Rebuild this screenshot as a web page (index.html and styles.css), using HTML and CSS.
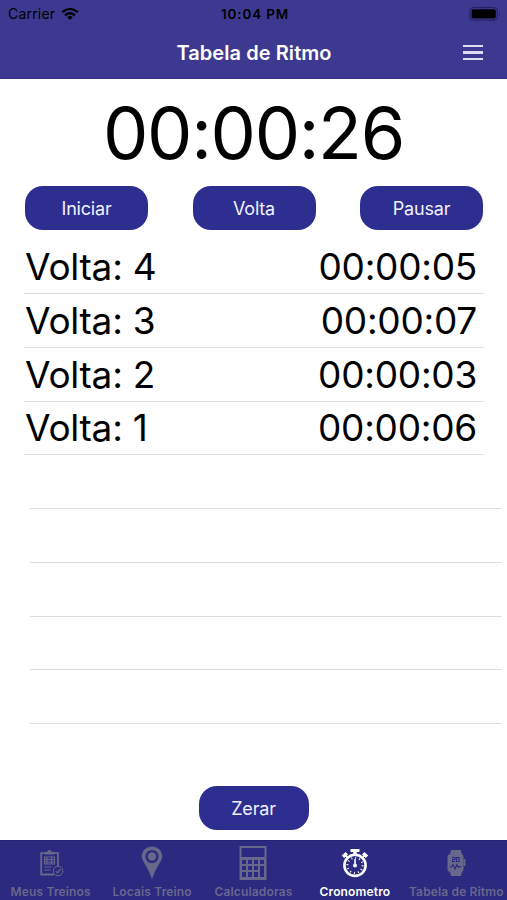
FILE: index.html
```html
<!DOCTYPE html>
<html lang="pt-BR">
<head>
<meta charset="utf-8">
<title>Tabela de Ritmo</title>
<link rel="stylesheet" href="styles.css">
</head>
<body>
<header class="top">
  <div class="status">
    <div class="carrier"><span>Carrier</span>
      <svg width="18" height="14" viewBox="0 0 18 14" fill="none" stroke="#000" stroke-width="2.3"><path d="M1.2 5.2Q9 -1.4 16.8 5.2M4 8.3Q9 4.2 14 8.3"/><path d="M9 13L6.1 10Q9 7.8 11.9 10Z" fill="#000" stroke="none"/></svg>
    </div>
    <span class="clock">10:04 PM</span>
    <svg class="battery" width="33" height="14" viewBox="0 0 33 14"><rect x=".9" y=".6" width="27.5" height="12.6" rx="3.6" fill="none" stroke="#211e5c"/><rect x="2.6" y="2.3" width="24.2" height="9.2" rx="2"/><path d="M30 5q1.8 2 0 4z" fill="#211e5c"/></svg>
  </div>
  <div class="nav">
    <h1>Tabela de Ritmo</h1>
    <div class="menu"><i></i><i></i><i></i></div>
  </div>
</header>
<main>
  <div class="timer">00:00:26</div>
  <div class="actions"><button>Iniciar</button><button>Volta</button><button>Pausar</button></div>
  <div class="laps">
    <div class="lap"><span>Volta: 4</span><span class="time">00:00:05</span></div>
    <div class="lap"><span>Volta: 3</span><span class="time">00:00:07</span></div>
    <div class="lap"><span>Volta: 2</span><span class="time">00:00:03</span></div>
    <div class="lap"><span>Volta: 1</span><span class="time">00:00:06</span></div>
    <div class="lap empty"></div><div class="lap empty"></div><div class="lap empty"></div><div class="lap empty"></div><div class="lap empty"></div>
  </div>
  <button class="reset">Zerar</button>
</main>
<nav class="tabs">
  <div class="tab">
    <svg width="26" height="32" viewBox="0 0 26 32" fill="none" stroke="currentColor"><path d="M16 27.500H3.200V6.200H20V19" stroke-width="1.800"/><path d="M7 7.500V4.800H9.500Q11.500 .800 13.500 4.800H16V7.500Z" fill="currentColor" stroke="none"/><path d="M6.500 10h10v7h-10zM7 12.500h9M7 15h9M9 10v7M13.500 10v7M6.500 20h7M6.500 23h6" stroke-width="1.100"/><circle cx="20" cy="24" r="4.800"/><path d="M17.700 24.100l1.800 1.800 3.200-3.800" stroke-width="1.300"/></svg>
    <span>Meus Treinos</span>
  </div>
  <div class="tab">
    <svg width="26" height="34" viewBox="0 0 26 34" fill="currentColor"><path fill-rule="evenodd" d="M13 .5C7.300 .500 2.800 4.800 2.800 10.300C2.800 15 8 19.500 13 33C18 19.500 23.200 15 23.200 10.300C23.200 4.800 18.700 .500 13 .500ZM13 3.900A6.600 6.600 0 0 1 13 17.100A6.600 6.600 0 0 1 13 3.900Z"/><circle cx="13" cy="10.500" r="4.200"/></svg>
    <span>Locais Treino</span>
  </div>
  <div class="tab">
    <svg width="28" height="36" viewBox="0 0 28 36" fill="currentColor"><path fill-rule="evenodd" d="M.5 1h27v34H.5zM2.500 3v9h23V3zM3 15v4h4v-4zM9 15v4h4v-4zM15 15v4h4v-4zM21 15v4h4v-4zM3 21v4h4v-4zM9 21v4h4v-4zM15 21v4h4v-4zM3 27v5h4v-5zM9 27v5h4v-5zM15 27v5h4v-5zM21 21v11h4V21z"/></svg>
    <span>Calculadoras</span>
  </div>
  <div class="tab active">
    <svg width="28" height="30" viewBox="0 0 28 30" fill="none" stroke="currentColor"><path d="M9.500 2.500h9" stroke-width="3"/><path d="M14 3v5" stroke-width="3.500"/><path d="M2 8.800l3.800-3.600M26 8.800l-3.800-3.600" stroke-width="3.400"/><path d="M4.500 7.500l3 3M23.500 7.500l-3 3" stroke-width="1.800"/><circle cx="14" cy="17.300" r="10.600" stroke-width="2.600"/><circle cx="14" cy="17.300" r="7.600" stroke-width="2" stroke-dasharray="1 2.979"/><path d="M14 11v6" stroke-width="1.600"/><circle cx="14" cy="17.500" r="2" fill="currentColor" stroke="none"/></svg>
    <span>Cronometro</span>
  </div>
  <div class="tab">
    <svg width="22" height="30" viewBox="0 0 22 30" fill="none"><path fill="currentColor" d="M6 2h10l1.200 5.500h-12.400zM6 28h10l1.200-5.500H4.800z"/><rect x="2.500" y="6" width="16" height="18" rx="3" fill="currentColor"/><path d="M19.500 11v7" stroke="currentColor" stroke-width="1.800"/><path d="M7 9.500h3v2H7.500v2H10M11.500 9.500H14v4h-2.500zM4.500 19h2l1.500-2.500 2 4.500 2-4.500 1.500 3 1-1h2" stroke="#2b2980" stroke-width="1.100"/></svg>
    <span>Tabela de Ritmo</span>
  </div>
</nav>
</body>
</html>
```
FILE: styles.css
```css
* { box-sizing: border-box; }
body {
  margin: 0; width: 507px; height: 900px; overflow: hidden;
  display: flex; flex-direction: column;
  background: #fff; color: #000; font-family: Inter, sans-serif;
}
.top { height: 79px; flex: none; background: #3d3990; border-bottom: 1px solid #343080; }
.status { height: 27px; display: grid; grid-template-columns: 1fr auto 1fr; align-items: center; padding: 0 5px 0 8px; }
.carrier { display: flex; align-items: center; gap: 6px; font-size: 14px; letter-spacing: .2px; }
.clock { font-size: 13.5px; font-weight: 600; letter-spacing: .8px; }
.battery { justify-self: end; }
.nav { height: 51px; display: grid; grid-template-columns: 1fr auto 1fr; align-items: center; padding: 0 24px 0 25px; color: #fff; }
h1 { grid-column: 2; margin: 0; font-size: 20px; line-height: 24px; font-weight: 600; letter-spacing: .07px; }
.menu { justify-self: end; width: 20px; display: grid; gap: 4px; }
.menu i { height: 2.3px; background: #dddcf4; }
main { flex: 1; display: flex; flex-direction: column; }
.timer { height: 107px; line-height: 107px; text-align: center; font-size: 72px; letter-spacing: -1.35px; white-space: nowrap; }
.actions { display: flex; justify-content: space-between; padding: 0 24px 0 25px; }
button {
  width: 123px; height: 44px; padding: 1px 0 0; border: 0; border-radius: 18px;
  background: #2d2e90; color: #f1f0ff; font: 400 18px/43px Inter, sans-serif; letter-spacing: -.2px;
}
.laps { padding-top: 10.3px; }
.lap {
  height: 53.75px; margin: 0 23px 0 24px; padding: 0 7px 0 1px;
  display: flex; justify-content: space-between; align-items: center;
  border-bottom: 1px solid #dededf; font-size: 37px; line-height: 53px; letter-spacing: -.25px; white-space: nowrap;
}
.lap.empty { margin: 0 5px 0 30px; }
.reset { width: 110px; align-self: center; margin-top: 61.7px; }
.tabs { height: 60px; flex: none; display: grid; grid-template-columns: repeat(5, 1fr); background: #2b2980; color: #68678c; border-top: 1px solid #252374; }
.tab { display: grid; grid-template-rows: 44px 14px; justify-items: center; align-items: center; font-size: 12px; font-weight: 600; letter-spacing: .15px; line-height: 14px; white-space: nowrap; }
.tab.active { color: #fff; }
```
